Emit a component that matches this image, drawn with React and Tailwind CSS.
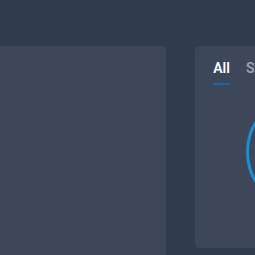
import React from 'react';

const App = () => {
    return (
        <div className="w-[255px] h-[255px] overflow-hidden bg-[#303b4e] pt-[46px]" style={{ fontFamily: 'Roboto, "Noto Sans", sans-serif' }}>
            <div className="flex gap-[29px] w-[600px]">
                <div className="w-[166px] h-[230px] shrink-0 rounded-tr-[4px] bg-[#3d4759]"></div>
                <div className="w-[320px] h-[202px] shrink-0 rounded-[4px] bg-[#3d4759] pt-[13px] pl-[18px] overflow-hidden">
                    <div className="flex gap-[16px] text-[14px] font-semibold">
                        <div className="flex flex-col items-center">
                            <span className="text-white leading-[18px]">All</span>
                            <span className="mt-[6px] h-[2px] w-[17px] bg-[#0f6ca6]"></span>
                        </div>
                        <span className="text-[#9aa3b0] leading-[18px]">Stocks</span>
                    </div>
                    <div className="mt-[9px] ml-[33px] w-[116px] h-[116px] rounded-full border-[3px] border-[#1b8fd6]"></div>
                </div>
            </div>
        </div>
    );
};

export default App;
